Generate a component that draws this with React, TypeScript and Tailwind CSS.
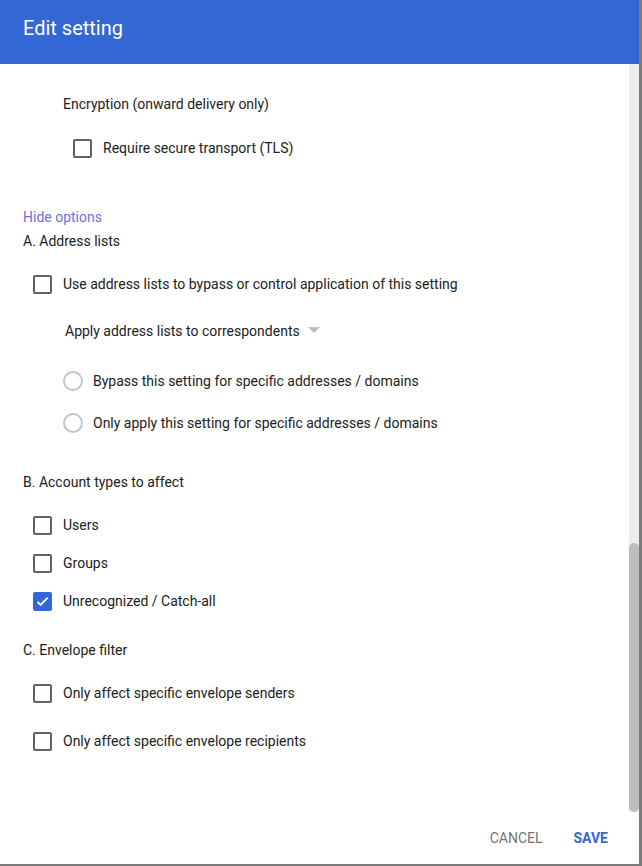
import React from "react";

function Checkbox({ checked = false }: { checked?: boolean }) {
  if (checked) {
    return (
      <span className="flex h-[19px] w-[19px] shrink-0 items-center justify-center rounded-[2px] bg-[#3367d6]">
        <svg viewBox="0 0 24 24" className="h-[17px] w-[17px]" fill="none">
          <path d="M5 12.5l4.2 4.2L19.5 6.4" stroke="#ffffff" strokeWidth="2.6" />
        </svg>
      </span>
    );
  }
  return <span className="block h-[19px] w-[19px] shrink-0 rounded-[2px] border-2 border-[#5f6368]" />;
}

function CheckRow({ label, checked, indent = "pl-[33px]", className = "" }: { label: string; checked?: boolean; indent?: string; className?: string }) {
  return (
    <div className={`flex h-[24px] items-center gap-[11px] ${indent} ${className}`}>
      <Checkbox checked={checked} />
      <span>{label}</span>
    </div>
  );
}

function RadioRow({ label, className = "" }: { label: string; className?: string }) {
  return (
    <div className={`flex h-[24px] items-center gap-[10px] pl-[63px] ${className}`}>
      <span className="block h-[20px] w-[20px] shrink-0 rounded-full border-2 border-[#c4c4c4]" />
      <span>{label}</span>
    </div>
  );
}

export default function App() {
  return (
    <div className="h-[866px] w-[642px] bg-[#7b7b7b]" style={{ fontFamily: "Roboto, 'Liberation Sans', sans-serif" }}>
      <div className="flex h-[864px] w-[639px] flex-col bg-white">
        <div className="h-[64px] bg-[#3367d6] pl-[23px] pt-[16px]">
          <h1 className="text-[20px] leading-[24px] text-white">Edit setting</h1>
        </div>

        <div className="flex h-[748px]">
          <div className="flex-1 text-[14px] leading-[20px] text-[#212121]">
            <div className="mt-[30px] h-[20px] pl-[63px]">Encryption (onward delivery only)</div>
            <CheckRow label="Require secure transport (TLS)" indent="pl-[73px]" className="mt-[22px]" />

            <div className="mt-[47px] h-[20px] pl-[23px] text-[#6b6fe3]">Hide options</div>
            <div className="mt-[4px] h-[20px] pl-[23px]">A. Address lists</div>
            <CheckRow label="Use address lists to bypass or control application of this setting" className="mt-[21px]" />

            <div className="mt-[25px] flex h-[20px] items-center gap-[8px] pl-[65px]">
              <span>Apply address lists to correspondents</span>
              <svg width="12" height="6" viewBox="0 0 12 6" className="mb-[2px]">
                <polygon points="0,0 12,0 6,6" fill="#bdbdbd" />
              </svg>
            </div>
            <RadioRow label="Bypass this setting for specific addresses / domains" className="mt-[28px]" />
            <RadioRow label="Only apply this setting for specific addresses / domains" className="mt-[18px]" />

            <div className="mt-[37px] h-[20px] pl-[23px]">B. Account types to affect</div>
            <CheckRow label="Users" className="mt-[21px]" />
            <CheckRow label="Groups" className="mt-[14px]" />
            <CheckRow label="Unrecognized / Catch-all" checked className="mt-[14px]" />

            <div className="mt-[27px] h-[20px] pl-[23px]">C. Envelope filter</div>
            <CheckRow label="Only affect specific envelope senders" className="mt-[21px]" />
            <CheckRow label="Only affect specific envelope recipients" className="mt-[24px]" />
          </div>

          <div className="w-[10px] bg-[#ededed] pt-[479px]">
            <div className="h-[269px] rounded-[5px] bg-[#bdbdbd]" />
          </div>
        </div>

        <div className="flex h-[52px] items-center justify-end gap-[31px] pr-[31px] text-[14px]">
          <button type="button" className="uppercase text-[#757575]">Cancel</button>
          <button type="button" className="font-bold uppercase text-[#3367d6]">Save</button>
        </div>
      </div>
    </div>
  );
}
